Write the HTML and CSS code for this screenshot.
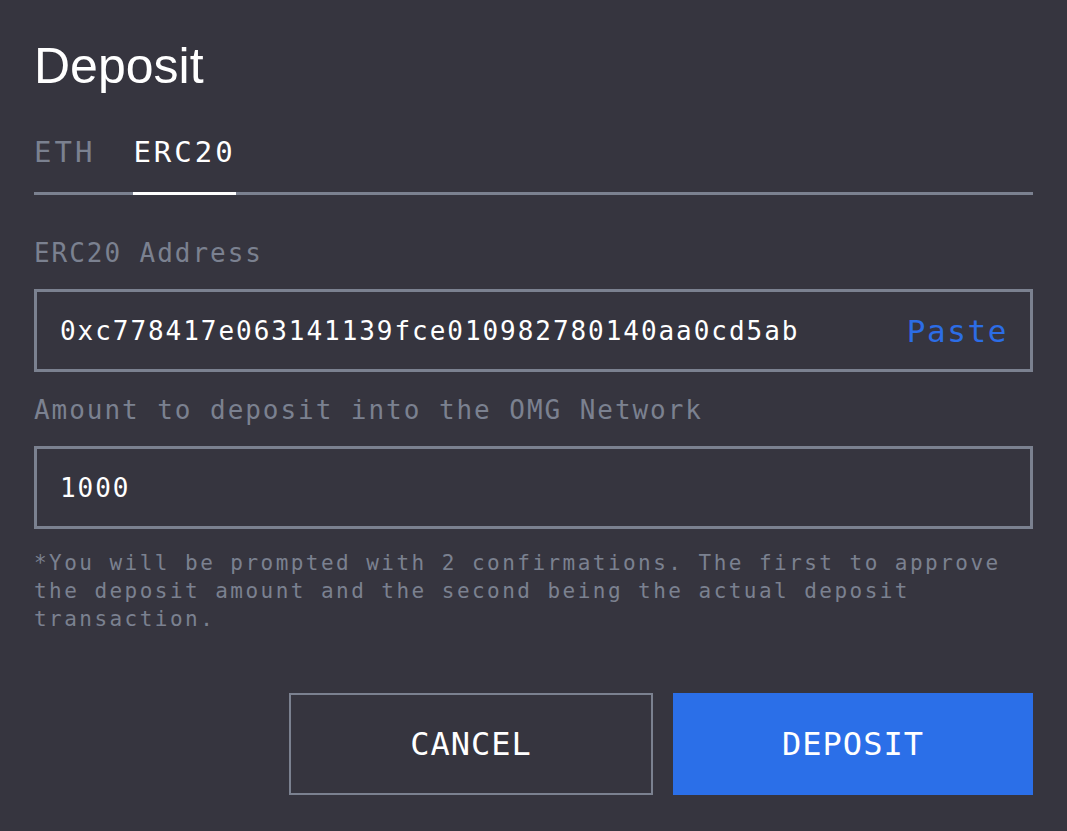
FILE: index.html
```html
<!DOCTYPE html>
<html lang="en">
<head>
<meta charset="utf-8">
<title>Deposit</title>
<link rel="stylesheet" href="styles.css">
</head>
<body>
<div class="modal">
  <h1 class="title">Deposit</h1>
  <div class="tabs">
    <div class="tab">ETH</div>
    <div class="tab tab-active">ERC20</div>
  </div>
  <div class="label label-first">ERC20 Address</div>
  <div class="field">
    <span class="field-value">0xc778417e063141139fce010982780140aa0cd5ab</span>
    <span class="paste">Paste</span>
  </div>
  <div class="label">Amount to deposit into the OMG Network</div>
  <div class="field">
    <span class="field-value">1000</span>
  </div>
  <p class="note">*You will be prompted with 2 confirmations. The first to approve the deposit amount and the second being the actual deposit transaction.</p>
  <div class="actions">
    <button class="btn btn-cancel">CANCEL</button>
    <button class="btn btn-primary">DEPOSIT</button>
  </div>
</div>
</body>
</html>
```
FILE: styles.css
```css
html, body {
  margin: 0;
  padding: 0;
  background: #36353f;
  height: 100%;
}

.modal {
  padding: 41px 34px 0 34px;
  font-family: "DejaVu Sans Mono", "Liberation Mono", monospace;
  color: #ffffff;
}

.title {
  margin: 0;
  font-family: "Liberation Sans", Arial, sans-serif;
  font-weight: 400;
  font-size: 50px;
  line-height: 50px;
  color: #ffffff;
}

.tabs {
  display: flex;
  gap: 38px;
  margin-top: 47px;
  border-bottom: 3px solid #7b8190;
}

.tab {
  font-size: 29px;
  line-height: 29px;
  letter-spacing: 3px;
  color: #7b8190;
  padding-bottom: 25px;
  border-bottom: 3px solid transparent;
  margin-bottom: -3px;
}

.tab-active {
  color: #ffffff;
  border-bottom-color: #ffffff;
}

.label {
  margin-top: 26px;
  font-size: 26px;
  line-height: 25px;
  letter-spacing: 1.95px;
  color: #7b8190;
}

.label-first {
  margin-top: 46px;
}

.field {
  box-sizing: border-box;
  height: 83px;
  margin-top: 23px;
  border: 3px solid #7b8190;
  display: flex;
  align-items: center;
  justify-content: space-between;
  padding: 2px 23px 0 23px;
}

.field-value {
  font-size: 26px;
  line-height: 25px;
  letter-spacing: 1.95px;
  color: #ffffff;
}

.paste {
  font-size: 31px;
  line-height: 29px;
  letter-spacing: 1.6px;
  margin-right: -1px;
  color: #2c6de6;
}

.note {
  margin: 20px 0 0 0;
  font-size: 21px;
  line-height: 28px;
  letter-spacing: 2.46px;
  color: #7b8190;
}

.actions {
  display: flex;
  justify-content: flex-end;
  gap: 20px;
  margin-top: 60px;
}

.btn {
  box-sizing: border-box;
  height: 102px;
  font-family: "DejaVu Sans Mono", "Liberation Mono", monospace;
  font-size: 32px;
  letter-spacing: 1px;
  color: #ffffff;
  cursor: pointer;
  padding: 0;
}

.btn-cancel {
  width: 364px;
  background: transparent;
  border: 2px solid #7b8190;
}

.btn-primary {
  width: 360px;
  background: #2b6fe8;
  border: none;
}
```
